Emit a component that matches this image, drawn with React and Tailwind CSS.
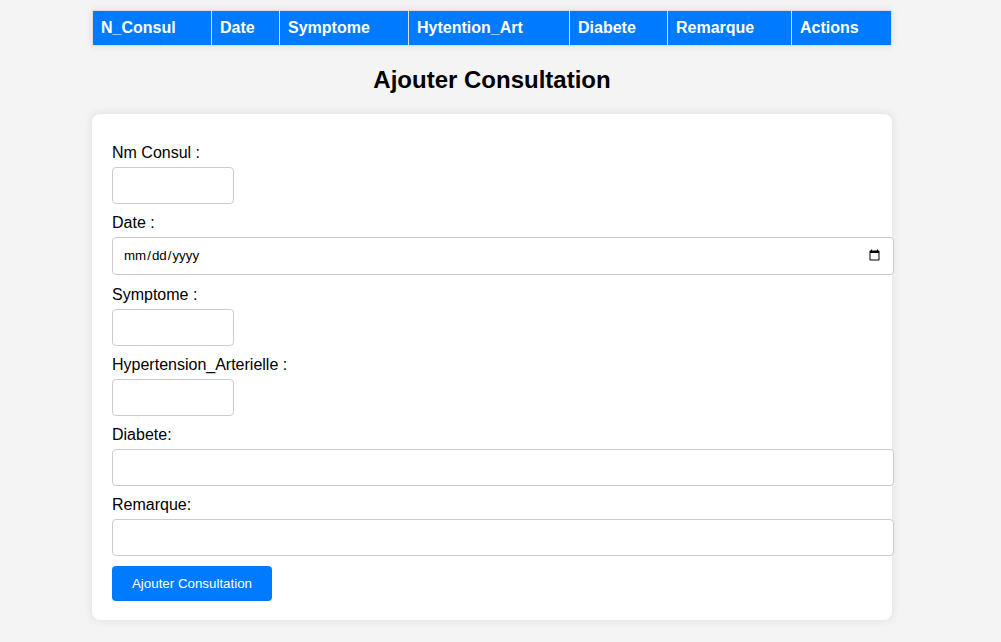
import React from "react";

const columns = [
  { label: "N_Consul", w: "w-[119px]" },
  { label: "Date", w: "w-[68px]" },
  { label: "Symptome", w: "w-[129px]" },
  { label: "Hytention_Art", w: "w-[161px]" },
  { label: "Diabete", w: "w-[98px]" },
  { label: "Remarque", w: "w-[124px]" },
  { label: "Actions", w: "w-[100px]" },
];

function Field({ label, children }) {
  return (
    <div className="flex flex-col items-start">
      <label className="block text-[16px] leading-[18px] text-black mb-[5px]">{label}</label>
      {children}
    </div>
  );
}

const inputBase =
  "border border-[#ccc] rounded-[4px] bg-white px-[10px] text-[13.33px] outline-none";

export default function App() {
  return (
    <div className="min-h-[642px] bg-[#f4f4f4] font-['Liberation_Sans',Arial,sans-serif] text-black">
      <div className="ml-[92px] w-[800px] pt-[10px]">
        <table className="w-[800px] table-fixed border-collapse shadow-[0_0_8px_rgba(0,0,0,0.08)]">
          <thead>
            <tr>
              {columns.map((c) => (
                <th
                  key={c.label}
                  className={`${c.w} bg-[#007bff] text-white text-left font-bold text-[16px] leading-[18px] px-[8px] py-[8px] border border-[#ddd]`}
                >
                  {c.label}
                </th>
              ))}
            </tr>
          </thead>
        </table>

        <h2 className="mt-[20px] text-center text-[24px] leading-[27px] font-bold">Ajouter Consultation</h2>

        <div className="mt-[21px] bg-white rounded-[8px] shadow-[0_0_10px_rgba(0,0,0,0.1)] px-[20px] pt-[30px] pb-[19px]">
          <Field label="Nm Consul :">
            <input type="text" className={`${inputBase} w-[122px] h-[37px] mb-[10px]`} />
          </Field>
          <Field label="Date :">
            <input type="date" className={`${inputBase} w-[782px] h-[38px] mb-[11px]`} />
          </Field>
          <Field label="Symptome :">
            <input type="text" className={`${inputBase} w-[122px] h-[37px] mb-[10px]`} />
          </Field>
          <Field label="Hypertension_Arterielle :">
            <input type="text" className={`${inputBase} w-[122px] h-[37px] mb-[10px]`} />
          </Field>
          <Field label="Diabete:">
            <input type="text" className={`${inputBase} w-[782px] h-[37px] mb-[10px]`} />
          </Field>
          <Field label="Remarque:">
            <input type="text" className={`${inputBase} w-[782px] h-[37px] mb-[10px]`} />
          </Field>
          <button
            type="button"
            className="w-[160px] h-[35px] bg-[#007bff] text-white text-[13.33px] rounded-[4px]"
          >
            Ajouter Consultation
          </button>
        </div>
      </div>
    </div>
  );
}
